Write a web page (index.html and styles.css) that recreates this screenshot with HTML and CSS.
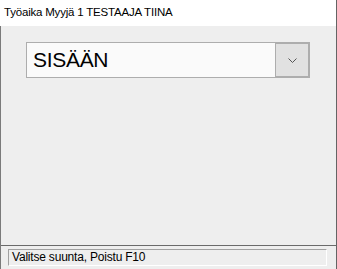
FILE: index.html
```html
<!DOCTYPE html>
<html lang="fi">
<head>
<meta charset="utf-8">
<title>Työaika</title>
<link rel="stylesheet" href="styles.css">
</head>
<body>
<div class="window">
  <div class="titlebar">Työaika Myyjä 1 TESTAAJA TIINA</div>
  <div class="client">
    <div class="main">
      <div class="combo">
        <div class="combo-value">SISÄÄN</div>
        <div class="combo-button">
          <svg width="9" height="6" viewBox="0 0 9 6"><polyline points="0.5,0.5 4.5,4.5 8.5,0.5" fill="none" stroke="#555" stroke-width="1"/></svg>
        </div>
      </div>
    </div>
    <div class="statusbar">
      <div class="status-field">Valitse suunta, Poistu F10</div>
    </div>
  </div>
</div>
</body>
</html>
```
FILE: styles.css
```css
html, body {
  margin: 0;
  padding: 0;
}
body {
  width: 337px;
  height: 269px;
  overflow: hidden;
  font-family: "Liberation Sans", Arial, sans-serif;
}
.window {
  box-sizing: border-box;
  width: 337px;
  height: 269px;
  display: flex;
  flex-direction: column;
  border-right: 1px solid #646464;
}
.titlebar {
  height: 26px;
  flex: none;
  background: #ffffff;
  color: #000;
  font-size: 11.5px;
  letter-spacing: -0.2px;
  padding: 3px 0 0 4px;
  line-height: 18px;
  white-space: nowrap;
  box-sizing: border-box;
}
.client {
  flex: 1;
  display: flex;
  flex-direction: column;
  background: #eeeeee;
  border-left: 1px solid #7a7a7a;
}
.main {
  flex: 1;
  padding: 16px 26px 0 25px;
}
.combo {
  display: flex;
  height: 36px;
  box-sizing: border-box;
}
.combo-value {
  flex: 1;
  background: #fafafa;
  border: 1px solid #adadad;
  border-right: none;
  font-size: 21px;
  letter-spacing: -0.3px;
  line-height: 34px;
  padding-left: 6px;
  color: #000;
}
.combo-button {
  width: 35px;
  box-sizing: border-box;
  background: #e1e1e1;
  border: 2px solid #adadad;
  border-left: 1px solid #adadad;
  display: flex;
  align-items: center;
  justify-content: center;
}
.combo-button svg {
  display: block;
  margin-top: 1px;
}
.statusbar {
  flex: none;
  height: 24px;
  border-top: 1px solid #6a6a6a;
  padding: 3px 9px 0 7px;
  box-sizing: border-box;
}
.status-field {
  height: 17px;
  box-sizing: border-box;
  border-top: 1px solid #a0a0a0;
  border-left: 1px solid #a0a0a0;
  border-right: 1px solid #ffffff;
  border-bottom: 1px solid #ffffff;
  font-size: 12px;
  letter-spacing: -0.2px;
  line-height: 15px;
  padding-left: 3px;
  color: #000;
  white-space: nowrap;
}
```
